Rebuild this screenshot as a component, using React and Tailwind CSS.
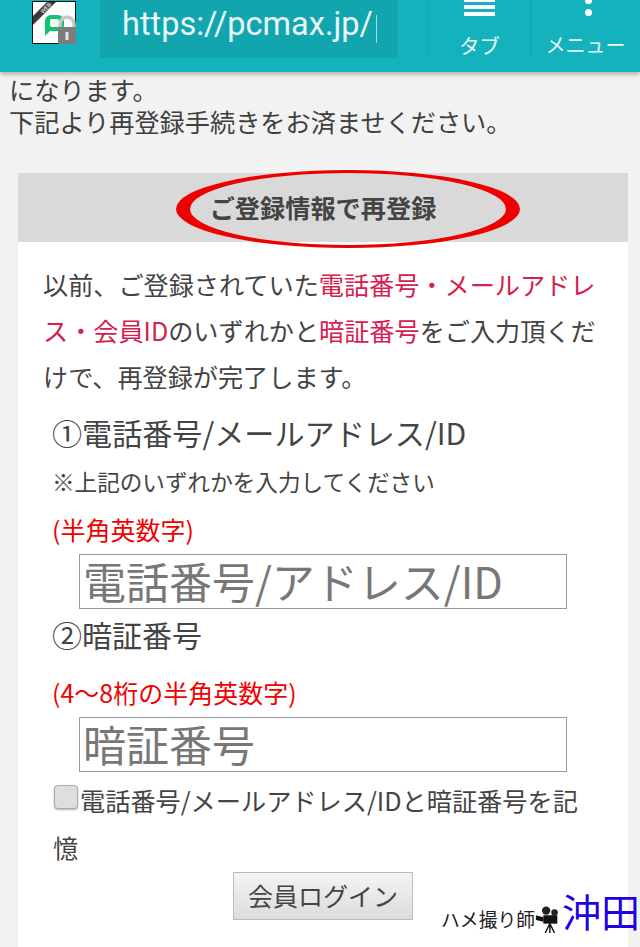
const jp = { fontFamily: '"Noto Sans CJK JP", Roboto, sans-serif' };

function Logo() {
  return (
    <svg width="45" height="45" viewBox="0 0 45 45" className="shrink-0">
      <rect x="0.5" y="0.5" width="43" height="42" fill="#fff" stroke="#111" />
      <path d="M1 15 L15 1 H24 L1 24 Z" fill="#3a3a3a" />
      <text x="11" y="13" fontSize="6" fill="#fff" transform="rotate(-45 11 13)" fontFamily="Roboto">WEB</text>
      <path d="M13 35 V20 a6 6 0 0 1 6-6 h7 a6 6 0 0 1 6 6 v4 a6 6 0 0 1 -6 6 h-8 Z" fill="#12c274" />
      <rect x="18" y="18" width="9" height="8" rx="2" fill="#fff" />
      <path d="M28 27 V23 a7 7 0 0 1 14 0 V27" fill="none" stroke="#c8c8c8" strokeWidth="3.5" />
      <rect x="26" y="26" width="18" height="17" rx="1" fill="#7d7d7d" />
      <rect x="33.5" y="31" width="3" height="8" fill="#e6e6e6" />
    </svg>
  );
}

function Camera() {
  return (
    <svg width="26" height="28" viewBox="0 0 26 30" className="shrink-0">
      <circle cx="11" cy="6" r="4.5" fill="#222" />
      <circle cx="20" cy="8" r="3.5" fill="#222" />
      <rect x="8" y="11" width="15" height="9" fill="#111" />
      <path d="M0 11 L8 13 V18 L0 16 Z" fill="#111" />
      <path d="M15 20 L10 30 M15 20 V30 M15 20 L20 30" stroke="#111" strokeWidth="1.5" fill="none" />
    </svg>
  );
}

function Header() {
  return (
    <header className="relative z-10 flex h-[72px] shrink-0 items-start bg-[#14b2bc] shadow-[0_2px_5px_rgba(0,0,0,0.3)]">
      <div className="ml-[32px] mt-[1px]"><Logo /></div>
      <div className="ml-[23px] flex h-[58px] w-[298px] items-start overflow-hidden bg-[#12a5ae] pl-[22px] pt-[3px] text-[32.5px] leading-[42px] text-[#e6f7f8]" style={{ fontFamily: 'Roboto, sans-serif' }}>
        https://pcmax.jp/<span className="ml-[3px] mt-[12px] h-[28px] w-px bg-[#9adfe3]" />
      </div>
      <div className="ml-[30px] flex h-[58px] w-[102px] flex-col items-center border-l border-[#12a3ad] text-[#eefafa]">
        <div className="mt-[-2px] flex w-[31px] flex-col gap-[3px]">
          <span className="h-[4px] bg-white" />
          <span className="h-[4px] bg-white" />
          <span className="h-[4px] bg-white" />
        </div>
        <span className="mt-[15px] text-[20.5px] leading-[28px]">タブ</span>
      </div>
      <div className="flex h-[58px] flex-1 flex-col items-center border-l border-[#12a3ad] pl-[6px] text-[#eefafa]">
        <div className="mt-[-3px] flex flex-col gap-[5px]">
          <span className="h-[7px] w-[7px] rounded-full bg-white" />
          <span className="h-[7px] w-[7px] rounded-full bg-white" />
        </div>
        <span className="ml-[-6px] mt-[15px] text-[20px] leading-[28px]">メニュー</span>
      </div>
    </header>
  );
}

export default function App() {
  return (
    <div className="relative flex h-[947px] w-[640px] flex-col overflow-hidden bg-[#f2f2f2] text-[#444]" style={jp}>
      <Header />

      <p className="ml-[9px] mt-[1px] text-[25.2px] leading-[32px] text-[#3f3f3f]">
        になります。<br />下記より再登録手続きをお済ませください。
      </p>

      <section className="ml-[18px] mr-[12px] mt-[36px] flex-1 bg-white">
        <h2 className="flex h-[69px] items-center justify-center bg-[#d9d9d9] text-[25.2px] font-bold text-[#444]">
          ご登録情報で再登録
        </h2>

        <p className="ml-[25px] mr-[31px] mt-[19px] text-[25.15px] leading-[46px] text-[#444]">
          以前、ご登録されていた<span className="text-[#d6204f]">電話番号・メールアドレス・会員ID</span>のいずれかと<span className="text-[#d6204f]">暗証番号</span>をご入力頂くだけで、再登録が完了します。
        </p>

        <div className="ml-[34px] mr-[30px] mt-[10px]">
          <div className="text-[30.1px] leading-[46px]">①電話番号/メールアドレス/ID</div>
          <div className="mt-[7px] text-[22.6px] leading-[40px]">※上記のいずれかを入力してください</div>
          <div className="mt-[7px] text-[25px] leading-[40px] text-[#f00000]">(半角英数字)</div>
          <input
            readOnly
            placeholder="電話番号/アドレス/ID"
            className="ml-[27px] mt-[5px] block h-[55px] w-[488px] border border-[#999] bg-white px-[3px] pb-[3px] text-[43px] placeholder:text-[#777]"
          />
          <div className="mt-[2px] text-[30px] leading-[46px]">②暗証番号</div>
          <div className="mt-[15px] text-[25px] leading-[40px] text-[#f00000]">(4～8桁の半角英数字)</div>
          <input
            readOnly
            placeholder="暗証番号"
            className="ml-[27px] mt-[5px] block h-[55px] w-[488px] border border-[#999] bg-white px-[3px] pb-[3px] text-[43px] placeholder:text-[#777]"
          />
          <p className="ml-[1px] mt-[5px] text-[25.2px] leading-[47px]">
            <span className="ml-[1px] mr-[2px] inline-block h-[24px] w-[24px] rounded-[4px] border border-[#aaa] bg-[#dedede] align-[2px] shadow-[0_1px_2px_rgba(0,0,0,0.3)]" />
            電話番号/メールアドレス/IDと暗証番号を記憶
          </p>
          <button className="ml-[181px] mt-[1px] block h-[48px] w-[180px] border border-[#bbb] bg-gradient-to-b from-[#f4f4f4] to-[#dcdcdc] text-[25px] text-[#444]">
            会員ログイン
          </button>
        </div>
      </section>

      {/* annotation drawn over the page */}
      <svg width="346" height="80" viewBox="0 0 346 80" className="absolute left-[175px] top-[169px]">
        <path
          fillRule="evenodd"
          fill="#ee0000"
          d="M1 40 a172 39 0 1 0 344 0 a172 39 0 1 0 -344 0 Z M15 40 a158 36 0 1 0 316 0 a158 36 0 1 0 -316 0 Z"
        />
      </svg>

      <div className="absolute bottom-[14px] right-0 flex items-end">
        <span className="mb-[2px] text-[18.8px] leading-[24px] text-[#222]">ハメ撮り師</span>
        <Camera />
        <span className="ml-[1px] text-[39px] leading-[46px] text-[#2200e6]">沖田</span>
      </div>
    </div>
  );
}
